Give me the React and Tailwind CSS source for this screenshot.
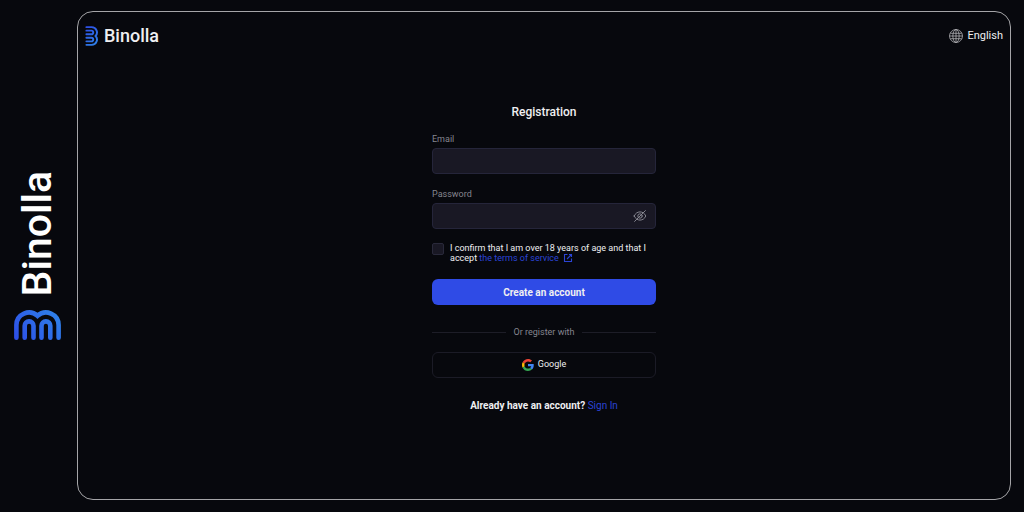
import React, { useState } from "react";

function MarkPaths({ id }) {
  return (
    <>
      <defs>
        <linearGradient id={id} gradientUnits="userSpaceOnUse" x1="4" y1="31" x2="40" y2="2">
          <stop offset="0" stopColor="#2d4fe8" />
          <stop offset="1" stopColor="#2f7fe8" />
        </linearGradient>
      </defs>
      <g fill="none" stroke={`url(#${id})`} strokeWidth="4.6" strokeLinecap="round">
        <path d="M2.4 27.7V15A12.6 12.6 0 0 1 23.5 5.8A12.6 12.6 0 0 1 44.6 15V27.7" />
        <path d="M10.7 27.7V15.8a4.4 4.4 0 0 1 8.8 0V27.7" />
        <path d="M27.5 27.7V15.8a4.4 4.4 0 0 1 8.8 0V27.7" />
      </g>
    </>
  );
}

function GlobeIcon() {
  return (
    <svg viewBox="0 0 16 16" className="size-3.5" fill="none" stroke="#b4b4b8" strokeWidth="0.9" aria-hidden="true">
      <circle cx="8" cy="8" r="7.4" />
      <ellipse cx="8" cy="8" rx="3.6" ry="7.4" />
      <path d="M8 .6v14.800M.6 8h14.800M1.500 4.900h13M1.500 11.100h13" />
    </svg>
  );
}

function EyeOffIcon() {
  return (
    <svg viewBox="0 0 14 14" className="size-3.5" fill="none" stroke="#85858f" strokeWidth="1" strokeLinecap="round" aria-hidden="true">
      <path d="M1.2 7C2.3 4.400 4.500 2.900 7 2.900S11.700 4.400 12.800 7C11.700 9.600 9.500 11.100 7 11.100S2.300 9.600 1.200 7Z" />
      <circle cx="7" cy="7" r="2.200" />
      <path d="M1.600 12.400L12.400 1.600" />
    </svg>
  );
}

function ExternalIcon() {
  return (
    <svg viewBox="0 0 10 10" className="ml-1 inline-block size-2.5 align-top" fill="none" stroke="#2b44d6" strokeWidth="1.100" aria-hidden="true">
      <path d="M4.500 1.500H1.500V8.500H8.500V5.500" />
      <path d="M6 1.500H8.500V4M8.500 1.500L4 6" />
    </svg>
  );
}

function GoogleIcon() {
  return (
    <svg viewBox="0 0 48 48" className="size-3" aria-hidden="true">
      <path fill="#EA4335" d="M24 9.500c3.540 0 6.710 1.220 9.210 3.600l6.850-6.850C35.900 2.380 30.470 0 24 0 14.620 0 6.510 5.380 2.560 13.220l7.980 6.190C12.430 13.720 17.740 9.500 24 9.500z" />
      <path fill="#4285F4" d="M46.980 24.550c0-1.570-.15-3.090-.38-4.550H24v9.020h12.940c-.58 2.960-2.260 5.480-4.780 7.180l7.730 6c4.510-4.180 7.090-10.360 7.090-17.650z" />
      <path fill="#FBBC05" d="M10.530 28.590c-.48-1.450-.76-2.990-.76-4.590s.27-3.140.76-4.590l-7.980-6.190C.92 16.460 0 20.120 0 24c0 3.880.92 7.540 2.560 10.780l7.970-6.190z" />
      <path fill="#34A853" d="M24 48c6.480 0 11.930-2.130 15.890-5.810l-7.730-6c-2.150 1.450-4.920 2.300-8.160 2.300-6.260 0-11.570-4.220-13.470-9.910l-7.980 6.190C6.510 42.620 14.620 48 24 48z" />
    </svg>
  );
}

export default function App() {
  const [show, setShow] = useState(false);
  return (
    <div className="flex min-h-screen bg-[#07080d] font-['Roboto',sans-serif] text-[#efeff1]">
      <aside className="flex w-[77px] shrink-0 flex-col items-center justify-center gap-3.5 pr-0.5">
        <span className="rotate-180 pl-0.5 text-[41px] leading-[48px] font-medium text-white [writing-mode:vertical-rl]">Binolla</span>
        <svg viewBox="0 0 47 31" className="h-[31px] w-[47px]" aria-hidden="true">
          <MarkPaths id="side-mark" />
        </svg>
      </aside>

      <div className="mt-[11px] mr-[13px] mb-3 flex grow flex-col rounded-2xl border border-[#a5a5a8] px-[7px]">
        <header className="flex h-12 items-center justify-between">
          <a href="#home" className="flex items-center gap-1.5">
            <svg viewBox="0 0 31 47" className="h-5 w-[13px]" aria-hidden="true">
              <g transform="translate(31 0) rotate(90)">
                <MarkPaths id="head-mark" />
              </g>
            </svg>
            <span className="text-lg leading-5 font-medium">Binolla</span>
          </a>
          <button type="button" className="flex items-center gap-1 text-[11px] leading-4">
            <GlobeIcon />
            English
          </button>
        </header>

        <main className="mx-auto mt-11 w-full max-w-[224px]">
          <h1 className="text-center text-xs leading-4 font-medium">Registration</h1>
          <form onSubmit={(e) => e.preventDefault()}>
            <label htmlFor="email" className="mt-3 block text-[9px] leading-3.5 text-[#85858f]">Email</label>
            <input id="email" type="email" className="mt-0.5 block h-[26px] w-full rounded-sm border border-[#25253a] bg-[#191824] px-2 text-[10px] outline-none" />
            <label htmlFor="password" className="mt-[13px] block text-[9px] leading-3.5 text-[#85858f]">Password</label>
            <div className="mt-0.5 flex h-[26px] items-center rounded-sm border border-[#25253a] bg-[#191824] pr-2">
              <input id="password" type={show ? "text" : "password"} className="h-full min-w-0 grow px-2 text-[10px] outline-none" />
              <button type="button" aria-label="Show password" onClick={() => setShow(!show)}>
                <EyeOffIcon />
              </button>
            </div>
            <div className="mt-3.5 flex gap-1.5">
              <input id="confirm" type="checkbox" className="size-3 shrink-0 appearance-none rounded-xs border border-[#29293a] bg-[#191824] checked:bg-[#2f4be6]" />
              <div className="text-[9px] leading-[10px]">
                <label htmlFor="confirm">I confirm that I am over 18 years of age and that I accept </label>
                <a href="#terms" className="text-[#2b44d6]">
                  the terms of service
                  <ExternalIcon />
                </a>
              </div>
            </div>
            <button type="submit" className="mt-4 h-[26px] w-full rounded-md bg-[#2f4be6] text-[10px] font-bold">Create an account</button>
          </form>
          <div className="mt-5 flex items-center gap-2 text-[9px] leading-3.5 text-[#85858f]">
            <span className="h-px grow bg-[#1d1d27]" />
            Or register with
            <span className="h-px grow bg-[#1d1d27]" />
          </div>
          <button type="button" className="mt-[13px] flex h-[26px] w-full items-center justify-center gap-1 rounded-md border border-[#1b1b26] text-[9px]">
            <GoogleIcon />
            Google
          </button>
          <p className="mt-5 text-center text-[10px] leading-4 font-bold">
            Already have an account? <a href="#signin" className="font-normal text-[#2b44d6]">Sign In</a>
          </p>
        </main>
      </div>
    </div>
  );
}
